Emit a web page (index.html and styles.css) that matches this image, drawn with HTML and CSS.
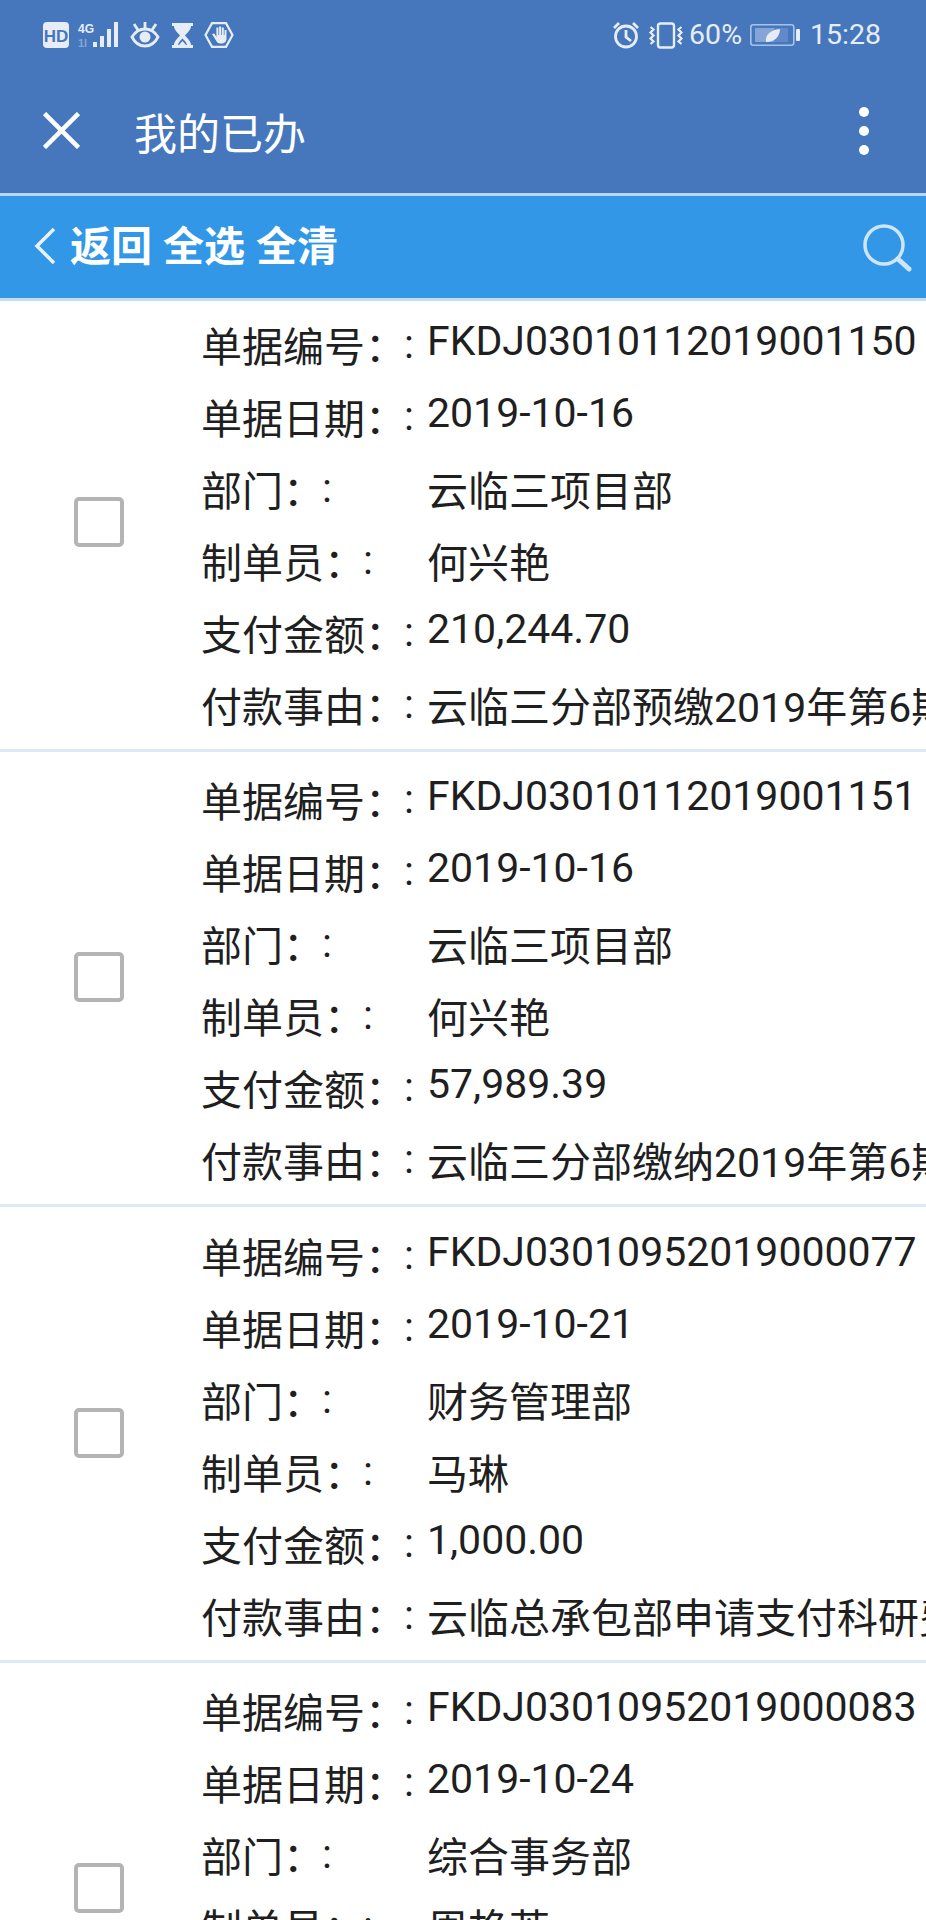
FILE: index.html
```html
<!DOCTYPE html>
<html lang="zh-CN">
<head>
    <meta charset="UTF-8" />
    <meta name="viewport" content="width=device-width, initial-scale=1.0" />
    <title>我的已办</title>
    <link rel="stylesheet" href="styles.css">
</head>
<body>
    <div class="app">
        <header class="appbar">
            <div class="status">
                <div class="status-left">
                    <svg width="26" height="26" viewBox="0 0 26 26"><rect width="26" height="26" rx="4" fill="#e6edf7"/><text x="13" y="19.500" text-anchor="middle" class="hd-text">HD</text></svg>
                    <svg width="43" height="26" viewBox="0 0 43 26">
                        <text x="0" y="10.500" class="net-text">4G</text>
                        <text x="0" y="25" class="net-sub">1l</text>
                        <rect x="15" y="20" width="4" height="5" fill="#e6edf7"/>
                        <rect x="22" y="14" width="4" height="11" fill="#e6edf7"/>
                        <rect x="29" y="7" width="4" height="18" fill="#e6edf7"/>
                        <rect x="36" y="0" width="4" height="25" fill="#e6edf7"/>
                    </svg>
                    <svg width="30" height="26" viewBox="0 0 30 26" fill="none" stroke="#e6edf7" stroke-width="2.800"><path d="M2 15c3-5 8-8 13-8s10 3 13 8c-3 6-8 9-13 9s-10-3-13-9z"/><circle cx="15" cy="15" r="5.500" fill="#e6edf7" stroke="none"/><path d="M4 2l4 6M15 0v6M26 2l-4 6"/></svg>
                    <svg class="ic-glass" width="21" height="25" viewBox="0 0 21 25"><path d="M0 0h21v3h-2c0 4-4 7-6 9.500 2 2.500 6 5.500 6 9.500h2v3H0v-3h2c0-4 4-7 6-9.500C6 10 2 7 2 3H0z" fill="#e6edf7"/><path d="M10.500 15.500c2 2 4 4 4.500 6.500H6c.5-2.500 2.500-4.500 4.500-6.500z" fill="#4677bd"/><path d="M10.500 18l3.500 4H7z" fill="#e6edf7"/></svg>
                    <svg class="ic-hand" width="30" height="26" viewBox="0 0 30 26"><path d="M8 1.200h14l6.500 11.800L22 24.800H8L1.500 13z" fill="none" stroke="#e6edf7" stroke-width="2.200"/><path d="M8 12l4 6.500c1 1.800 2 3 4 3h1.500c3 0 5-2 5-5V8h-2v5h-.7V5.500h-2V13h-.7V4.500h-2V13h-.7V5.500h-2V15l-2-3.500z" fill="#e6edf7"/></svg>
                </div>
                <div class="status-right">
                    <svg width="28" height="28" viewBox="0 0 28 28" fill="none" stroke="#e6edf7" stroke-width="2.800"><circle cx="14" cy="15.500" r="10.500"/><path d="M14 9v7l5 4M2 7l5-5M26 7l-5-5"/></svg>
                    <svg class="ic-vib" width="36" height="27" viewBox="0 0 36 27" fill="none" stroke="#e6edf7"><rect x="10" y="1.500" width="16" height="24" rx="2.500" stroke-width="2.400"/><path d="M2.500 5l3 2.500-3 3 3 3-3 3 3 3-3 2.500M33.500 5l-3 2.500 3 3-3 3 3 3-3 3 3 2.500" stroke-width="2.200"/></svg>
                    <span class="pct">60%</span>
                    <svg class="ic-batt" width="50" height="24" viewBox="0 0 50 24"><rect x="0.800" y="1.800" width="43" height="20.500" rx="2.500" fill="none" stroke="#a8c2e6" stroke-width="1.600"/><rect x="5" y="5" width="19" height="14" fill="#85a5d6"/><rect x="24" y="5" width="14" height="14" fill="#6289c8"/><rect x="46" y="6" width="4" height="12" rx="1" fill="#e6edf7"/><path d="M16 19c-1-7 4-12 14-13 0 7-5 13-14 13z" fill="#e6edf7"/></svg>
                    <span class="clock">15:28</span>
                </div>
            </div>
            <div class="titlebar">
                <svg width="37" height="37" viewBox="0 0 37 37" stroke="#fff" stroke-width="4.500" fill="none"><path d="M1.500 1.500l34 34M35.500 1.500l-34 34"/></svg>
                <span class="title">我的已办</span>
                <div class="menu"><i></i><i></i><i></i></div>
            </div>
        </header>

        <nav class="toolbar">
            <svg class="ic-back" width="22" height="38" viewBox="0 0 22 38" fill="none" stroke="#e8f2fc" stroke-width="3.500"><path d="M20 2L3 19l17 17"/></svg>
            <a class="tool">返回</a>
            <a class="tool">全选</a>
            <a class="tool">全清</a>
            <svg class="ic-search" width="50" height="50" viewBox="0 0 50 50" fill="none" stroke="#cfe6fa" stroke-width="3.500"><circle cx="22" cy="21" r="19"/><path d="M36 35l11 10" stroke-width="5" stroke-linecap="round"/></svg>
        </nav>

        <section class="list">
            <div class="item">
                <div class="check"><span class="box"></span></div>
                <div class="fields">
                    <div class="field"><span class="key"><span class="label">单据编号：</span><span class="colon">:</span></span><span class="val num">FKDJ03010112019001150</span></div>
                    <div class="field"><span class="key"><span class="label">单据日期：</span><span class="colon">:</span></span><span class="val num">2019-10-16</span></div>
                    <div class="field"><span class="key"><span class="label">部门：</span><span class="colon">:</span></span><span class="val">云临三项目部</span></div>
                    <div class="field"><span class="key"><span class="label">制单员：</span><span class="colon">:</span></span><span class="val">何兴艳</span></div>
                    <div class="field"><span class="key"><span class="label">支付金额：</span><span class="colon">:</span></span><span class="val num">210,244.70</span></div>
                    <div class="field"><span class="key"><span class="label">付款事由：</span><span class="colon">:</span></span><span class="val">云临三分部预缴2019年第6期</span></div>
                </div>
            </div>
            <div class="item">
                <div class="check"><span class="box"></span></div>
                <div class="fields">
                    <div class="field"><span class="key"><span class="label">单据编号：</span><span class="colon">:</span></span><span class="val num">FKDJ03010112019001151</span></div>
                    <div class="field"><span class="key"><span class="label">单据日期：</span><span class="colon">:</span></span><span class="val num">2019-10-16</span></div>
                    <div class="field"><span class="key"><span class="label">部门：</span><span class="colon">:</span></span><span class="val">云临三项目部</span></div>
                    <div class="field"><span class="key"><span class="label">制单员：</span><span class="colon">:</span></span><span class="val">何兴艳</span></div>
                    <div class="field"><span class="key"><span class="label">支付金额：</span><span class="colon">:</span></span><span class="val num">57,989.39</span></div>
                    <div class="field"><span class="key"><span class="label">付款事由：</span><span class="colon">:</span></span><span class="val">云临三分部缴纳2019年第6期</span></div>
                </div>
            </div>
            <div class="item">
                <div class="check"><span class="box"></span></div>
                <div class="fields">
                    <div class="field"><span class="key"><span class="label">单据编号：</span><span class="colon">:</span></span><span class="val num">FKDJ03010952019000077</span></div>
                    <div class="field"><span class="key"><span class="label">单据日期：</span><span class="colon">:</span></span><span class="val num">2019-10-21</span></div>
                    <div class="field"><span class="key"><span class="label">部门：</span><span class="colon">:</span></span><span class="val">财务管理部</span></div>
                    <div class="field"><span class="key"><span class="label">制单员：</span><span class="colon">:</span></span><span class="val">马琳</span></div>
                    <div class="field"><span class="key"><span class="label">支付金额：</span><span class="colon">:</span></span><span class="val num">1,000.00</span></div>
                    <div class="field"><span class="key"><span class="label">付款事由：</span><span class="colon">:</span></span><span class="val">云临总承包部申请支付科研费</span></div>
                </div>
            </div>
            <div class="item">
                <div class="check"><span class="box"></span></div>
                <div class="fields">
                    <div class="field"><span class="key"><span class="label">单据编号：</span><span class="colon">:</span></span><span class="val num">FKDJ03010952019000083</span></div>
                    <div class="field"><span class="key"><span class="label">单据日期：</span><span class="colon">:</span></span><span class="val num">2019-10-24</span></div>
                    <div class="field"><span class="key"><span class="label">部门：</span><span class="colon">:</span></span><span class="val">综合事务部</span></div>
                    <div class="field"><span class="key"><span class="label">制单员：</span><span class="colon">:</span></span><span class="val">周艳芳</span></div>
                    <div class="field"></div>
                    <div class="field"></div>
                </div>
            </div>
        </section>
    </div>
</body>
</html>
```

FILE: styles.css
```css
html, body {
    margin: 0;
    padding: 0;
}
body {
    background-color: #fff;
    color: #1f1f1f;
    font-family: Roboto, "Noto Sans CJK SC", sans-serif;
}
.app {
    width: 926px;
    height: 1920px;
    overflow: hidden;
}
.appbar {
    height: 193px;
    background-color: #4677bd;
    border-bottom: 3px solid #bcd6f0;
}
.status {
    height: 65px;
    padding: 5px 45px 0 43px;
    box-sizing: border-box;
    display: flex;
    justify-content: space-between;
    align-items: center;
    color: #e6edf7;
}
.status-left, .status-right {
    display: flex;
    align-items: center;
}
.status-left {
    gap: 9px;
}
.ic-glass {
    margin-left: 3px;
}
.ic-hand {
    margin-left: 2px;
}
.hd-text {
    font: bold 17px "Liberation Sans", sans-serif;
    fill: #4677bd;
}
.net-text {
    font: bold 12px "Liberation Sans", sans-serif;
    fill: #e6edf7;
}
.net-sub {
    font: bold 11px "Liberation Sans", sans-serif;
    fill: #85a5d6;
}
.pct, .clock {
    font-size: 28.500px;
    line-height: 32px;
}
.ic-vib {
    margin: 0 5px 0 8px;
}
.ic-batt {
    margin: 0 10px 0 8px;
}
.titlebar {
    height: 128px;
    box-sizing: border-box;
    padding: 3px 57px 0 43px;
    display: flex;
    align-items: center;
    color: #fff;
}
.title {
    font-size: 43px;
    margin-left: 54px;
    flex: 1;
}
.menu {
    display: flex;
    flex-direction: column;
    gap: 9px;
}
.menu i {
    display: block;
    width: 10px;
    height: 10px;
    border-radius: 50%;
    background-color: #fff;
}
.toolbar {
    height: 105px;
    box-sizing: border-box;
    background-color: #3197e6;
    border-bottom: 3px solid #c5dcf1;
    display: flex;
    align-items: center;
    padding: 0 14px 9px 34px;
    color: #fff;
}
.tool {
    font-size: 41px;
    font-weight: bold;
    margin-right: 11px;
}
.ic-back {
    margin: 7px 14px 0 0;
}
.ic-search {
    margin: 13px 0 0 auto;
}
.item {
    box-sizing: border-box;
    padding: 14px 0 6.600px;
    border-bottom: 3px solid #dde9f4;
    display: flex;
    align-items: center;
}
.item:first-child {
    padding-top: 9px;
}
.check {
    width: 201px;
    flex: none;
    padding: 0 0 9px 74px;
    box-sizing: border-box;
}
.box {
    display: block;
    width: 50px;
    height: 50px;
    box-sizing: border-box;
    border: 4px solid #b4b4b4;
    border-radius: 5px;
}
.fields {
    flex: 1;
    min-width: 0;
    overflow: hidden;
}
.field {
    display: flex;
    align-items: center;
    height: 72px;
    box-sizing: border-box;
    padding-bottom: 5px;
    font-size: 41px;
    white-space: nowrap;
}
.key {
    display: flex;
    align-items: center;
    width: 226px;
    flex: none;
}
.colon {
    margin-left: -2px;
}
.val {
    flex: none;
}
.num {
    margin-bottom: 6px;
}
```
